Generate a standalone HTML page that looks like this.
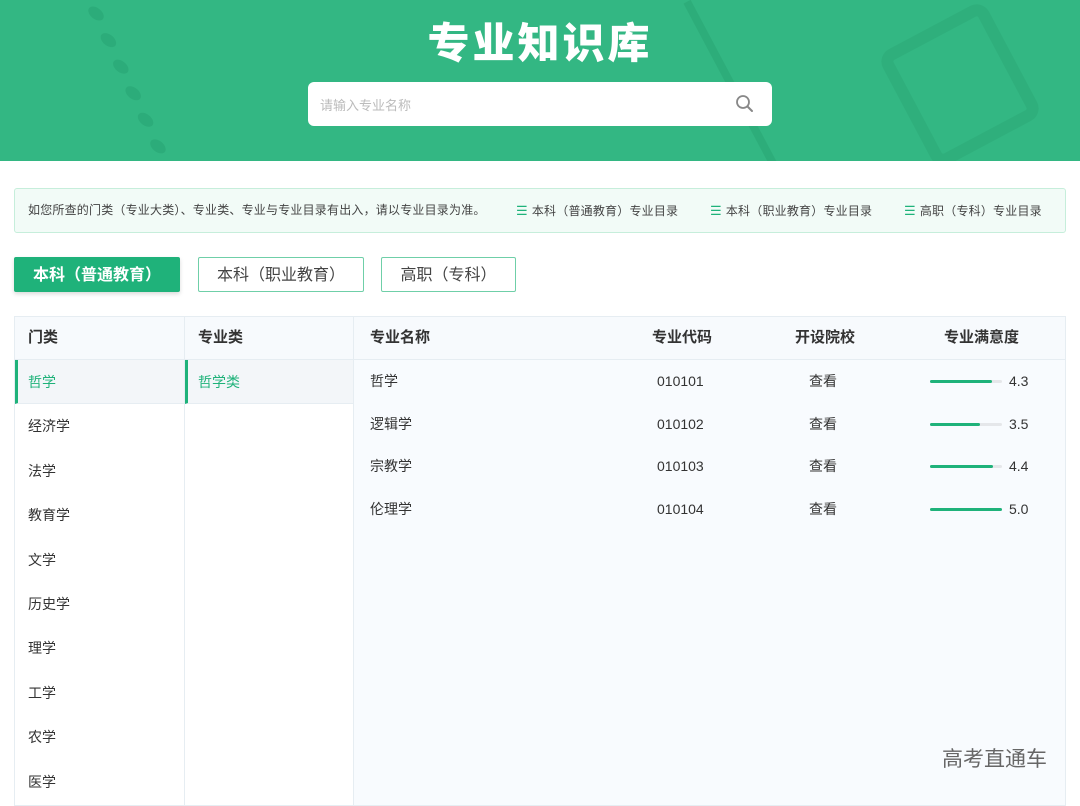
<!DOCTYPE html>
<html><head><meta charset="utf-8"><style>
*{margin:0;padding:0;box-sizing:border-box}
body{width:1080px;height:797px;overflow:hidden;background:#fff;font-family:"Liberation Sans","Noto Sans CJK SC",sans-serif;color:#333;position:relative}
.hd{position:absolute;left:0;top:0;width:1080px;height:161px;background:#33b783;overflow:hidden}
.hd .deco1{position:absolute;left:120px;top:-20px;width:150px;height:200px;border-left:14px dotted rgba(0,100,60,.12);transform:skewX(25deg)}
.hd .deco2{position:absolute;left:730px;top:-10px;width:8px;height:200px;background:rgba(0,90,50,.1);transform:rotate(-28deg)}
.hd .deco3{position:absolute;left:900px;top:20px;width:120px;height:130px;border:12px solid rgba(0,90,50,.08);border-radius:14px;transform:rotate(-28deg)}
.title{position:absolute;left:0;width:1080px;top:10px;text-align:center;color:#fff;font-size:42px;font-weight:900;letter-spacing:3px;font-family:"Noto Sans CJK SC",sans-serif}
.search{position:absolute;left:308px;top:82px;width:464px;height:44px;background:#fff;border-radius:6px}
.search span{position:absolute;left:12px;top:13px;font-size:13px;color:#bbb}
.notice{position:absolute;left:14px;top:188px;width:1052px;height:45px;background:#f2fbf7;border:1px solid #c6eedb;border-radius:3px;font-size:12px;letter-spacing:.2px;color:#444;line-height:43px;padding-left:13px;white-space:nowrap}
.notice b{font-weight:normal;color:#1fb27a;margin:0 4px 0 0;font-size:13px}
.tab{position:absolute;top:257px;height:35px;border:1px solid #6fcfa8;border-radius:2px;font-size:16px;line-height:35px;text-align:center;color:#444}
.tab.on{background:#1fb27a;border-color:#1fb27a;color:#fff;font-weight:bold;box-shadow:0 2px 4px rgba(0,0,0,.15)}
.tbl{position:absolute;left:14px;top:316px;width:1052px;height:490px;border:1px solid #e6edf2}
.c1{position:absolute;left:0;top:0;width:170px;height:100%;border-right:1px solid #e6edf2}
.c2{position:absolute;left:170px;top:0;width:169px;height:100%;border-right:1px solid #e6edf2}
.c3{position:absolute;left:339px;top:0;width:711px;height:100%;background:#f8fbfe}
.th{height:43px;background:#f7fafd;border-bottom:1px solid #e6edf2;font-size:15px;font-weight:bold;line-height:42px;padding-left:13px;color:#333}
.row{height:44.4px;line-height:44px;padding-left:13px;font-size:14px}
.sel{background:#f3f6f9;color:#1fb27a;border-left:3px solid #1fb27a;padding-left:10px;border-bottom:1px solid #e6edf2}
.r3{position:relative;height:42.7px;font-size:14px}
.r3 div{position:absolute;top:0;line-height:42px}
.bar{position:absolute;left:576px;top:20px;width:72px;height:3px;background:#e5e7ea;border-radius:2px}
.bar i{display:block;height:3px;background:#1fb27a;border-radius:2px}
.wm{position:absolute;left:942px;top:743px;font-size:21px;color:#666}
</style></head><body>
<div class="hd"><div class="deco1"></div><div class="deco2"></div><div class="deco3"></div>
<div class="title">专业知识库</div>
<div class="search"><span>请输入专业名称</span>
<svg style="position:absolute;left:427px;top:12px" width="20" height="20" viewBox="0 0 20 20"><circle cx="8" cy="8" r="6" fill="none" stroke="#888" stroke-width="1.8"/><path d="M12.5 12.5L17 17" stroke="#888" stroke-width="2" stroke-linecap="round"/></svg></div>
</div>
<div class="notice">如您所查的门类（专业大类）、专业类、专业与专业目录有出入，请以专业目录为准。<span style="position:absolute;left:501px"><b>☰</b>本科（普通教育）专业目录</span><span style="position:absolute;left:695px"><b>☰</b>本科（职业教育）专业目录</span><span style="position:absolute;left:889px"><b>☰</b>高职（专科）专业目录</span></div>
<div class="tab on" style="left:14px;width:166px">本科（普通教育）</div>
<div class="tab" style="left:198px;width:166px">本科（职业教育）</div>
<div class="tab" style="left:381px;width:135px">高职（专科）</div>
<div class="tbl">
<div class="c1"><div class="th">门类</div>
<div class="row sel">哲学</div><div class="row">经济学</div><div class="row">法学</div><div class="row">教育学</div><div class="row">文学</div><div class="row">历史学</div><div class="row">理学</div><div class="row">工学</div><div class="row">农学</div><div class="row">医学</div></div>
<div class="c2"><div class="th">专业类</div><div class="row sel">哲学类</div></div>
<div class="c3"><div class="th" style="position:relative;padding-left:16px">专业名称<span style="position:absolute;left:298px">专业代码</span><span style="position:absolute;left:441px">开设院校</span><span style="position:absolute;left:590px">专业满意度</span></div>
<div class="r3"><div style="left:16px">哲学</div><div style="left:303px">010101</div><div style="left:455px">查看</div><span class="bar"><i style="width:62px"></i></span><div style="left:655px">4.3</div></div>
<div class="r3"><div style="left:16px">逻辑学</div><div style="left:303px">010102</div><div style="left:455px">查看</div><span class="bar"><i style="width:50px"></i></span><div style="left:655px">3.5</div></div>
<div class="r3"><div style="left:16px">宗教学</div><div style="left:303px">010103</div><div style="left:455px">查看</div><span class="bar"><i style="width:63px"></i></span><div style="left:655px">4.4</div></div>
<div class="r3"><div style="left:16px">伦理学</div><div style="left:303px">010104</div><div style="left:455px">查看</div><span class="bar"><i style="width:72px"></i></span><div style="left:655px">5.0</div></div>
</div></div>
<div class="wm">高考直通车</div>
</body></html>
